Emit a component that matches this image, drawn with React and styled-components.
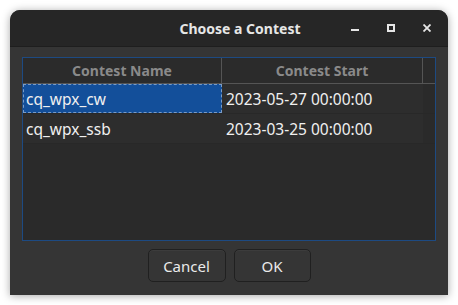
import React, { useState } from 'react';
import styled, { createGlobalStyle } from 'styled-components';

const GlobalStyle = createGlobalStyle`
  html, body {
    margin: 0;
    padding: 0;
    background: #ffffff;
    font-family: "Noto Sans", "Open Sans", sans-serif;
  }
`;

const Page = styled.div`
  width: 458px;
  height: 305px;
  padding: 10px;
  box-sizing: border-box;
`;

const Window = styled.div`
  width: 438px;
  height: 285px;
  display: flex;
  flex-direction: column;
  background: #353535;
  border-radius: 10px 10px 0 0;
  box-shadow: 0 1px 8px rgba(0, 0, 0, 0.35);
  overflow: hidden;
`;

const TitleBar = styled.div`
  height: 37px;
  flex-shrink: 0;
  display: flex;
  align-items: center;
  background: #262626;
  border-bottom: 1px solid #1e1e1e;
  box-sizing: border-box;
`;

const Title = styled.div`
  flex: 1;
  text-align: center;
  padding-left: 133px;
  color: #e6e6e6;
  font-weight: 700;
  font-size: 14px;
`;

const Controls = styled.div`
  display: flex;
  align-items: center;
  padding-right: 3px;
`;

const Ctl = styled.div`
  width: 36px;
  height: 24px;
  display: flex;
  align-items: center;
  justify-content: center;
`;

const Content = styled.div`
  flex: 1;
  display: flex;
  flex-direction: column;
  padding: 10px 12px 13px 12px;
  gap: 8px;
`;

const Table = styled.div`
  height: 184px;
  border: 1px solid #1d4a82;
  background: #2a2a2a;
  display: flex;
  flex-direction: column;
  box-sizing: border-box;
`;

const Row = styled.div`
  display: grid;
  grid-template-columns: 199px 201px 1fr;
  height: ${(p) => (p.$header ? '26px' : '30px')};
  box-sizing: border-box;
  border-bottom: ${(p) => (p.$header ? 'none' : '1px solid #282828')};
`;

const HeadCell = styled.div`
  display: flex;
  align-items: center;
  justify-content: center;
  color: #8a8a8a;
  font-weight: 700;
  font-size: 14px;
  background: #2b2b2b;
  border-right: 1px solid #555;
  border-bottom: 1px solid #555;
  &:last-child {
    border-right: none;
  }
`;

const Cell = styled.div`
  display: flex;
  align-items: center;
  padding-left: ${(p) => (p.$first ? '3px' : '4px')};
  color: #f0f0f0;
  font-size: 15.5px;
  box-sizing: border-box;
  background: ${(p) => (p.$selected ? '#134f9a' : p.$filler ? 'transparent' : '#2d2d2d')};
  outline: ${(p) => (p.$selected ? '1px dashed #7a9cc7' : 'none')};
  outline-offset: -1px;
`;

const Buttons = styled.div`
  display: flex;
  justify-content: center;
  gap: 8px;
`;

const Button = styled.button`
  width: ${(p) => p.$w}px;
  height: 33px;
  background: #353535;
  border: 1px solid #202020;
  border-radius: 5px;
  color: #eaeaea;
  font-family: "Noto Sans", "Open Sans", sans-serif;
  font-size: 15px;
  box-shadow: inset 0 1px 0 rgba(255, 255, 255, 0.04);
  cursor: pointer;
`;

const contests = [
  { name: 'cq_wpx_cw', start: '2023-05-27 00:00:00' },
  { name: 'cq_wpx_ssb', start: '2023-03-25 00:00:00' },
];

const App = () => {
  const [selected, setSelected] = useState(0);

  return (
    <Page>
      <GlobalStyle />
      <Window>
        <TitleBar>
          <Title>Choose a Contest</Title>
          <Controls>
            <Ctl>
              <svg width="8" height="8" viewBox="0 0 8 8">
                <rect x="0" y="5" width="8" height="2" fill="#e6e6e6" />
              </svg>
            </Ctl>
            <Ctl>
              <svg width="8" height="8" viewBox="0 0 8 8">
                <rect x="1" y="1" width="6" height="6" fill="none" stroke="#e6e6e6" strokeWidth="2" />
              </svg>
            </Ctl>
            <Ctl>
              <svg width="8" height="8" viewBox="0 0 8 8">
                <path d="M0.5 0.5 L7.5 7.5 M7.5 0.5 L0.5 7.5" stroke="#e6e6e6" strokeWidth="1.8" />
              </svg>
            </Ctl>
          </Controls>
        </TitleBar>
        <Content>
          <Table>
            <Row $header>
              <HeadCell>Contest Name</HeadCell>
              <HeadCell>Contest Start</HeadCell>
              <HeadCell />
            </Row>
            {contests.map((c, i) => (
              <Row key={c.name} onClick={() => setSelected(i)}>
                <Cell $first $selected={selected === i}>{c.name}</Cell>
                <Cell>{c.start}</Cell>
                <Cell $filler />
              </Row>
            ))}
          </Table>
          <Buttons>
            <Button $w={78}>Cancel</Button>
            <Button $w={77}>OK</Button>
          </Buttons>
        </Content>
      </Window>
    </Page>
  );
};

export default App;
